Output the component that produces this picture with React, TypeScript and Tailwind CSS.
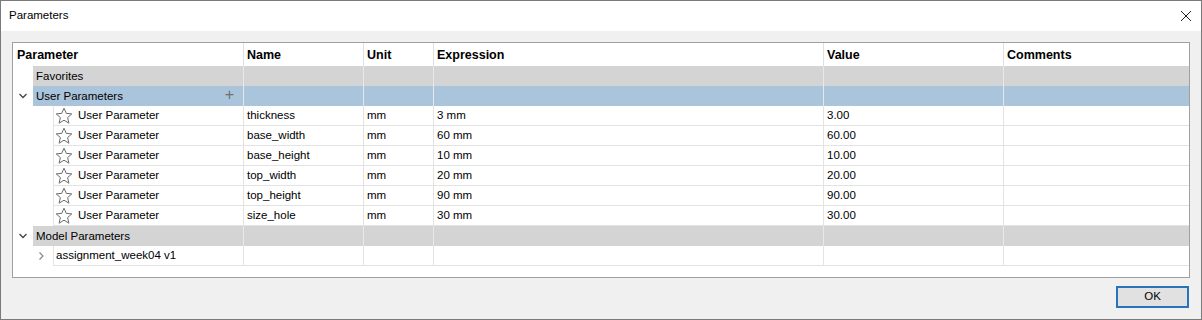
import React from "react";

const font = { fontFamily: '"Liberation Sans", Arial, sans-serif' };

function Star() {
  return (
    <svg width="18" height="18" viewBox="0 0 18 18" className="shrink-0">
      <path
        d="M9 1.2 L11.3 6.4 L16.8 6.9 L12.6 10.6 L13.9 16.2 L9 13.2 L4.1 16.2 L5.4 10.6 L1.2 6.9 L6.7 6.4 Z"
        fill="none"
        stroke="#6b6b6b"
        strokeWidth="1"
        strokeLinejoin="round"
      />
    </svg>
  );
}

function ChevronDown() {
  return (
    <svg width="10" height="10" viewBox="0 0 10 10">
      <path d="M1.5 3 L5 6.5 L8.5 3" fill="none" stroke="#444" strokeWidth="1.3" />
    </svg>
  );
}

function ChevronRight() {
  return (
    <svg width="10" height="10" viewBox="0 0 10 10">
      <path d="M3.5 1.5 L7 5 L3.5 8.5" fill="none" stroke="#8a8a8a" strokeWidth="1.2" />
    </svg>
  );
}

const cols = ["thickness", "base_width", "base_height", "top_width", "top_height", "size_hole"];
const exprs = ["3 mm", "60 mm", "10 mm", "20 mm", "90 mm", "30 mm"];
const vals = ["3.00", "60.00", "10.00", "20.00", "90.00", "30.00"];

function BandRow({
  label,
  bg,
  chevron,
  plus,
}: {
  label: string;
  bg: string;
  chevron?: boolean;
  plus?: boolean;
}) {
  return (
    <div className="flex h-[20px]">
      <div className="w-[20px] flex items-center justify-center pr-[1px] bg-white">
        {chevron ? <ChevronDown /> : null}
      </div>
      <div
        className={`flex-1 grid grid-cols-[211px_120px_70px_390px_180px_1fr] ${bg}`}
      >
        <div className="border-r border-[#e8e8e8] flex items-center pl-[3px] pr-[9px] pt-[1px] justify-between">
          <span>{label}</span>
          {plus ? <span className="text-[#707070] text-[16px] leading-none pb-[3px]">+</span> : null}
        </div>
        <div className="border-r border-[#e8e8e8]" />
        <div className="border-r border-[#e8e8e8]" />
        <div className="border-r border-[#e8e8e8]" />
        <div className="border-r border-[#e8e8e8]" />
        <div />
      </div>
    </div>
  );
}

export default function App() {
  return (
    <div
      className="w-[1202px] h-[320px] border border-[#7a7a7a] bg-[#f0f0f0] flex flex-col text-[11.5px] text-black"
      style={font}
    >
      <div className="h-[30px] bg-white flex items-center justify-between pl-[8px] pr-[9px] shrink-0">
        <span className="text-[11.5px]">Parameters</span>
        <svg width="12" height="12" viewBox="0 0 12 12">
          <path d="M1 1 L11 11 M11 1 L1 11" stroke="#222" strokeWidth="1" />
        </svg>
      </div>
      <div className="flex flex-col px-[11px] pt-[11px]">
        <div className="h-[236px] border border-[#a0a0a0] bg-white flex flex-col">
          <div className="h-[23px] grid grid-cols-[231px_120px_70px_390px_180px_1fr] font-bold text-[12.5px]">
            <div className="border-r border-[#e0e0e0] flex items-center pl-[4px] pt-[1px]">Parameter</div>
            <div className="border-r border-[#e0e0e0] flex items-center pl-[3px] pt-[1px]">Name</div>
            <div className="border-r border-[#e0e0e0] flex items-center pl-[3px] pt-[1px]">Unit</div>
            <div className="border-r border-[#e0e0e0] flex items-center pl-[3px] pt-[1px]">Expression</div>
            <div className="border-r border-[#e0e0e0] flex items-center pl-[3px] pt-[1px]">Value</div>
            <div className="flex items-center pl-[3px] pt-[1px]">Comments</div>
          </div>
          <BandRow label="Favorites" bg="bg-[#d4d4d4]" />
          <BandRow label="User Parameters" bg="bg-[#aac4dc]" chevron plus />
          {cols.map((n, i) => (
            <div key={n} className="flex h-[20px]">
              <div className="w-[40px] bg-white" />
              <div className="flex-1 grid grid-cols-[190px_120px_70px_390px_180px_1fr] border-l border-b border-[#e3e3e3]">
                <div className="border-r border-[#e3e3e3] flex items-center pl-[1px] gap-[5px]">
                  <Star />
                  <span className="pt-[1px]">User Parameter</span>
                </div>
                <div className="border-r border-[#e3e3e3] flex items-center pl-[3px] pt-[1px]">{n}</div>
                <div className="border-r border-[#e3e3e3] flex items-center pl-[3px] pt-[1px]">mm</div>
                <div className="border-r border-[#e3e3e3] flex items-center pl-[3px] pt-[1px]">{exprs[i]}</div>
                <div className="border-r border-[#e3e3e3] flex items-center pl-[3px] pt-[1px]">{vals[i]}</div>
                <div />
              </div>
            </div>
          ))}
          <BandRow label="Model Parameters" bg="bg-[#d4d4d4]" chevron />
          <div className="flex h-[20px]">
            <div className="w-[40px] bg-white flex items-center justify-end pr-[7px]">
              <ChevronRight />
            </div>
            <div className="flex-1 grid grid-cols-[190px_120px_70px_390px_180px_1fr] border-l border-b border-[#e3e3e3]">
              <div className="border-r border-[#e3e3e3] flex items-center pl-[2px] pt-[1px]">
                assignment_week04 v1
              </div>
              <div className="border-r border-[#e3e3e3]" />
              <div className="border-r border-[#e3e3e3]" />
              <div className="border-r border-[#e3e3e3]" />
              <div className="border-r border-[#e3e3e3]" />
              <div />
            </div>
          </div>
        </div>
        <div className="flex justify-end mt-[8px] pr-[1px]">
          <button className="w-[73px] h-[22px] border-2 border-[#2a73b8] bg-[#e1e1e1] flex items-center justify-center text-[11.5px]">
            OK
          </button>
        </div>
      </div>
    </div>
  );
}
